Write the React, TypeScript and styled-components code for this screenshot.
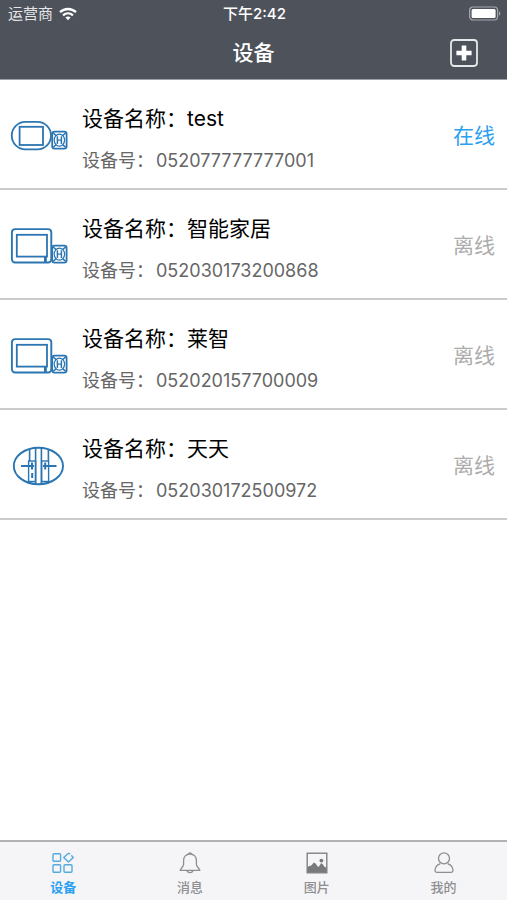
import React from 'react';
import styled, { createGlobalStyle } from 'styled-components';

const GlobalStyle = createGlobalStyle`
  * { box-sizing: border-box; }
  body {
    margin: 0;
    background: #fff;
    color: #000;
    font-family: Inter, "Noto Sans CJK SC", sans-serif;
  }
  svg { display: block; }
`;

const Screen = styled.div`
  display: flex;
  flex-direction: column;
  min-height: 100vh;
`;

const Header = styled.header`
  background: #4e535b;
  color: #fff;
  border-bottom: 1px solid #9b9fa3;
`;

const Columns = styled.div`
  display: grid;
  grid-template-columns: 1fr auto 1fr;
  align-items: center;
`;

const StatusBar = styled(Columns)`
  height: 27px;
  padding: 0 6px 0 8px;
  font-size: 15px;
  line-height: 27px;
`;

const Carrier = styled.span`
  display: flex;
  align-items: center;
  gap: 6px;
  color: #e4e5e7;
`;

const Clock = styled.time`
  font-weight: 500;
`;

const BatterySlot = styled.span`
  justify-self: end;
`;

const TitleBar = styled(Columns)`
  height: 52px;
  padding: 0 28px;
`;

const Title = styled.h1`
  grid-column: 2;
  margin: 0;
  font-size: 21px;
  line-height: 52px;
  font-weight: 500;
`;

const AddButton = styled.button`
  justify-self: end;
  padding: 0;
  border: 0;
  background: none;
  color: #fff;
  cursor: pointer;
`;

const DeviceList = styled.ul`
  flex: 1;
  margin: 0;
  padding: 0;
  list-style: none;
`;

const DeviceRow = styled.li`
  display: flex;
  align-items: center;
  padding: 8px 12px 4px 10px;
  border-bottom: 2px solid #cbcbcb;
`;

const IconSlot = styled.span`
  flex: none;
  width: 72px;
`;

const DeviceText = styled.div`
  flex: 1;
  min-width: 0;
  padding: 10px 0 2px;
`;

const DeviceName = styled.p`
  margin: 0;
  font-size: 21px;
  line-height: 42px;
`;

const DeviceNumber = styled.p`
  display: flex;
  gap: 2px;
  margin: 0;
  color: #666;
  font-size: 18px;
  line-height: 42px;
`;

const Status = styled.span<{ $online: boolean }>`
  flex: none;
  color: ${({ $online }) => ($online ? '#2b9ff0' : '#acacac')};
  font-size: 21px;
  line-height: 42px;
`;

const TabBar = styled.nav`
  display: grid;
  grid-template-columns: repeat(4, 1fr);
  background: #f5f5f7;
  border-top: 2px solid #b2b2b3;
`;

const Tab = styled.button<{ $active: boolean }>`
  display: flex;
  flex-direction: column;
  align-items: center;
  gap: 2px;
  height: 58px;
  padding: 9px 0 0;
  border: 0;
  background: none;
  color: ${({ $active }) => ($active ? '#2ba0f2' : '#8e8e90')};
  font-family: inherit;
  font-size: 13px;
  line-height: 20px;
  font-weight: ${({ $active }) => ($active ? 700 : 500)};
  cursor: pointer;
`;

const WifiIcon = () => (
  <svg width="18" height="14" viewBox="0 0 18 14" fill="none" stroke="#fff" strokeWidth="2.3" aria-hidden="true">
    <path d="M1 5.2C5.6.9 12.4.9 17 5.2" />
    <path d="M4 8.3c2.9-2.7 7.1-2.7 10 0" />
    <path d="M6.4 10.6c1.5-1.5 3.7-1.5 5.2 0L9 13.2z" fill="#fff" stroke="none" />
  </svg>
);

const BatteryIcon = () => (
  <svg width="33" height="15" viewBox="0 0 33 15" fill="none" role="img" aria-label="电池">
    <rect x="1.600" y="1" width="28" height="13" rx="3.5" stroke="#a5a8ac" strokeWidth="1.2" />
    <rect x="3.600" y="3" width="24" height="9" rx="1.5" fill="#fff" />
    <path d="M31 5.3c1.8.8 1.8 3.6 0 4.4z" fill="#a5a8ac" />
  </svg>
);

const PlusIcon = () => (
  <svg width="30" height="30" viewBox="0 0 30 30" fill="none" stroke="currentColor" aria-hidden="true">
    <rect x="2" y="2" width="26" height="26" rx="3.2" strokeWidth="1.8" stroke="#e6e8e9" />
    <path d="M15 7.4v15.200M7.400 15h15.200" strokeWidth="4.6" />
  </svg>
);

const blue = '#2b76b2';

const Sensor = () => (
  <g>
    <rect x="42.2" y="20.6" width="14.4" height="17" rx="2.4" strokeWidth="1.8" />
    <ellipse cx="49.4" cy="29.1" rx="5.2" ry="6" strokeWidth="1.2" />
    <path d="M47.4 25.2v7.800M51.4 25.2v7.800" strokeWidth="1.5" />
    <path d="M48 29.1h3" strokeWidth="1.2" />
    <path d="M43.2 22l3 2.600M55.600 22l-3 2.600M43.2 36.200l3-2.600M55.600 36.200l-3-2.600" strokeWidth="1.500" />
  </g>
);

const RoundPeephole = () => (
  <svg width="60" height="44" viewBox="0 0 60 44" fill="none" stroke={blue} aria-hidden="true">
    <rect x="1.8" y="7.8" width="39.2" height="27.6" rx="13.6" strokeWidth="1.8" />
    <rect x="9.6" y="12.8" width="23.4" height="18.2" strokeWidth="1.8" />
    <g transform="translate(0 -3)"><Sensor /></g>
  </svg>
);

const SquarePeephole = () => (
  <svg width="60" height="44" viewBox="0 0 60 44" fill="none" stroke={blue} aria-hidden="true">
    <rect x="1.9" y="5.1" width="39.4" height="33.4" rx="3.2" strokeWidth="1.9" />
    <rect x="6.8" y="10.800" width="30.2" height="21.8" strokeWidth="1.8" />
    <path d="M35.4 33v5" strokeWidth="2.8" />
    <g transform="translate(0 1)"><Sensor /></g>
  </svg>
);

const DoorLock = () => (
  <svg width="60" height="44" viewBox="0 0 60 44" fill="none" stroke={blue} aria-hidden="true">
    <ellipse cx="28.4" cy="22" rx="24.6" ry="18.2" strokeWidth="1.9" />
    <path d="M25.6 4v36M31.4 4v36M19.6 5.4v12M38.4 5.4v12" strokeWidth="1.6" />
    <rect x="18.6" y="17" width="7" height="20.5" strokeWidth="1.4" />
    <rect x="31.6" y="17" width="7" height="20.5" strokeWidth="1.4" />
    <path d="M11 22h13M33 22h13.5" strokeWidth="2.2" />
    <path d="M22 18.4v7M35.2 18.4v7M22.2 29v5" strokeWidth="2" />
  </svg>
);

const GridIcon = () => (
  <svg width="24" height="24" viewBox="0 0 24 24" fill="none" stroke="#54aadf" strokeWidth="1.4" aria-hidden="true">
    <rect x="2" y="2.7" width="7.6" height="7.6" rx="1" />
    <rect x="2" y="13.7" width="7.6" height="7.6" rx="1" />
    <rect x="13" y="13.7" width="8" height="7.6" rx="1" />
    <path d="M18.7 2.8l-1.2-.5-4.8 4.2 4.8 4.6 4.8-4.5-1.6-1.8" strokeLinejoin="round" strokeLinecap="round" />
  </svg>
);

const BellIcon = () => (
  <svg width="24" height="24" viewBox="0 0 24 24" fill="none" stroke="currentColor" strokeWidth="1.3" strokeLinejoin="round" aria-hidden="true">
    <path d="M10.6 3.200a1.400 1.400 0 0 1 2.800 0" />
    <path d="M12 3c-4 0-6.400 2.900-6.400 6.400v3.800c0 2.600-3.400 4.500-3.400 6.200h19.600c0-1.700-3.400-3.600-3.400-6.200V9.400C18.400 5.900 16 3 12 3z" />
    <path d="M9 19.600c.5 2.600 5.500 2.600 6 0" />
  </svg>
);

const PictureIcon = () => (
  <svg width="24" height="24" viewBox="0 0 24 24" fill="none" stroke="#77797b" aria-hidden="true">
    <rect x="2.2" y="2.2" width="19.6" height="19.6" strokeWidth="1.3" />
    <circle cx="16.4" cy="9.6" r="1.9" fill="#77797b" stroke="none" />
    <path d="M2.500 21.500v-5.300l2-1.400 1.200.2 3.200-3.600 1.600 1.100 2.600 3.400 1-.6 2.100-3.200 1.800 1.300 1.200 2.200 2.300 1.200v4.700z" fill="#77797b" stroke="none" />
  </svg>
);

const PersonIcon = () => (
  <svg width="24" height="24" viewBox="0 0 24 24" fill="none" stroke="currentColor" strokeWidth="1.3" strokeLinejoin="round" aria-hidden="true">
    <circle cx="12" cy="7.4" r="5.5" />
    <path d="M8.300 12.600c-3.200 1.300-5.300 4.300-5.300 7 0 1.100.6 1.700 1.700 1.700h14.600c1.100 0 1.700-.6 1.700-1.700 0-2.700-2.100-5.700-5.300-7" />
  </svg>
);

const devices = [
  { name: 'test', number: '052077777777001', online: true, Icon: RoundPeephole },
  { name: '智能家居', number: '052030173200868', online: false, Icon: SquarePeephole },
  { name: '莱智', number: '052020157700009', online: false, Icon: SquarePeephole },
  { name: '天天', number: '052030172500972', online: false, Icon: DoorLock },
];

const tabs = [
  { label: '设备', Icon: GridIcon },
  { label: '消息', Icon: BellIcon },
  { label: '图片', Icon: PictureIcon },
  { label: '我的', Icon: PersonIcon },
];

export default function App() {
  const [active, setActive] = React.useState('设备');

  return (
    <Screen lang="zh-CN">
      <GlobalStyle />
      <Header>
        <StatusBar>
          <Carrier>运营商<WifiIcon /></Carrier>
          <Clock>下午2:42</Clock>
          <BatterySlot><BatteryIcon /></BatterySlot>
        </StatusBar>
        <TitleBar>
          <Title>设备</Title>
          <AddButton type="button" aria-label="添加设备"><PlusIcon /></AddButton>
        </TitleBar>
      </Header>
      <DeviceList>
        {devices.map(({ name, number, online, Icon }) => (
          <DeviceRow key={number}>
            <IconSlot><Icon /></IconSlot>
            <DeviceText>
              <DeviceName>设备名称：{name}</DeviceName>
              <DeviceNumber><span>设备号：</span><span>{number}</span></DeviceNumber>
            </DeviceText>
            <Status $online={online}>{online ? '在线' : '离线'}</Status>
          </DeviceRow>
        ))}
      </DeviceList>
      <TabBar>
        {tabs.map(({ label, Icon }) => (
          <Tab
            key={label}
            type="button"
            $active={label === active}
            aria-current={label === active ? 'page' : undefined}
            onClick={() => setActive(label)}
          >
            <Icon />
            {label}
          </Tab>
        ))}
      </TabBar>
    </Screen>
  );
}
